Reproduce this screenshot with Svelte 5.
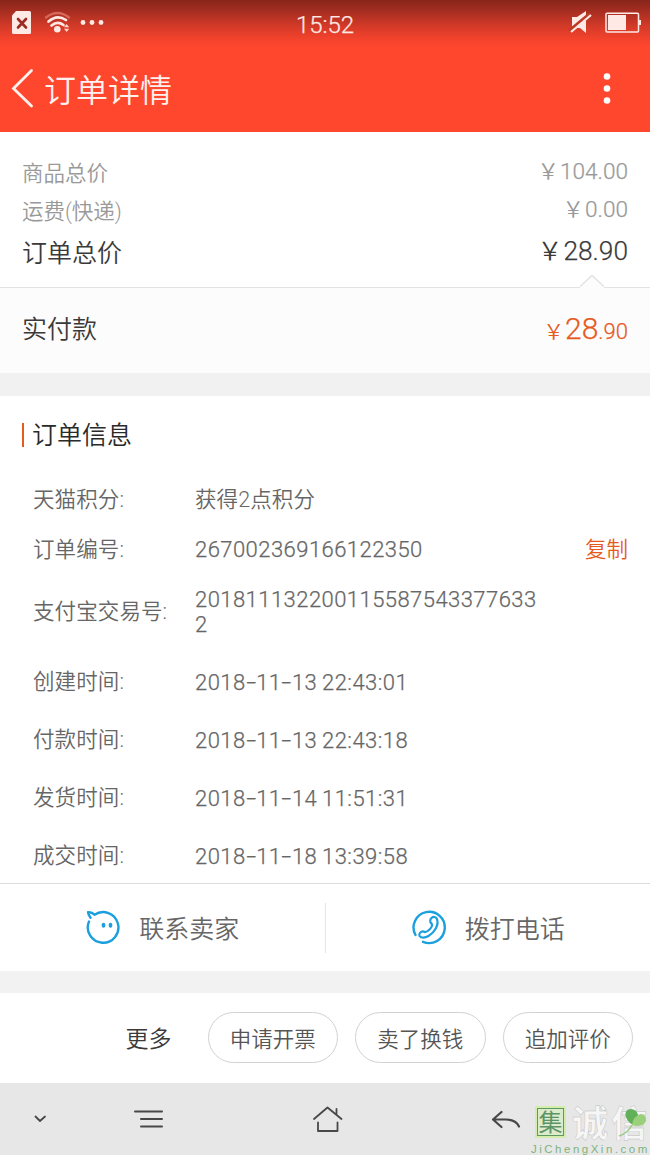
<script lang="ts">
	const prices = [
		{ label: "商品总价", value: "104.00", total: false },
		{ label: "运费(快递)", value: "0.00", total: false },
		{ label: "订单总价", value: "28.90", total: true },
	];

	const details = [
		{ label: "天猫积分", value: "获得2点积分", kind: "points" },
		{ label: "订单编号", value: "267002369166122350", kind: "short", copy: true },
		{ label: "支付宝交易号", value: "2018111322001155875433776332", kind: "long" },
		{ label: "创建时间", value: "2018-11-13 22:43:01", kind: "time" },
		{ label: "付款时间", value: "2018-11-13 22:43:18", kind: "time" },
		{ label: "发货时间", value: "2018-11-14 11:51:31", kind: "time" },
		{ label: "成交时间", value: "2018-11-18 13:39:58", kind: "time" },
	];

	const more = ["申请开票", "卖了换钱", "追加评价"];
</script>

<div class="page">
	<header>
		<div class="status-bar">
			<svg class="status-left" width="110" height="46" viewBox="0 0 110 46">
				<path d="M16 11h13.500q1.500 0 1.500 1.500V32.500q0 1.500-1.500 1.500h-16q-1.500 0-1.500-1.500V15.500z" fill="#ffe9e5" />
				<path d="M18 19l8 8.500M26 19l-8 8.500" stroke="#9b2c20" stroke-width="2.600" stroke-linecap="round" />
				<path d="M46 17.500Q57.500 8.500 69 17.500" fill="none" stroke="#d8665a" stroke-width="2.400" stroke-linecap="round" />
				<path d="M48.500 21.500Q57 14 66 20M51.500 25.500Q57.500 20.500 63.500 25" fill="none" stroke="#ffe9e5" stroke-width="2.700" stroke-linecap="round" />
				<circle cx="57.300" cy="29.300" r="3.300" fill="#ffe9e5" />
				<path d="M64 27.200l2.600-3.200 2.600 3.200zM64 28.800l2.600 3.200 2.600-3.200z" fill="#ffd2ca" />
				<circle cx="83" cy="22.500" r="2.400" fill="#ffe9e5" />
				<circle cx="92" cy="22.500" r="2.400" fill="#ffe9e5" />
				<circle cx="101" cy="22.500" r="2.400" fill="#ffe9e5" />
			</svg>
			<span class="clock">15:52</span>
			<svg class="status-right" width="85" height="46" viewBox="565 0 85 46">
				<path d="M572 17h5l9-6v22l-6-5h-8z" fill="#ffe9e5" />
				<path d="M569.500 31L590 14" stroke="#bd3928" stroke-width="4" />
				<path d="M571 32L591 15" stroke="#ffe9e5" stroke-width="2.200" />
				<rect x="606" y="13.200" width="32.500" height="18.800" rx="1" fill="none" stroke="#ffe9e5" stroke-width="1.500" />
				<path d="M608 15h18v15h-18zM639 20h2v5h-2z" fill="#ffe9e5" />
			</svg>
		</div>
		<div class="title-bar">
			<svg width="44" height="86" viewBox="0 0 44 86">
				<path d="M31.500 24.500L13.500 42.500L31.500 60" fill="none" stroke="#fff1ee" stroke-width="2.800" stroke-linecap="round" />
			</svg>
			<h1>订单详情</h1>
			<svg class="menu" width="20" height="86" viewBox="0 0 20 86">
				<circle cx="10" cy="30.500" r="3.300" fill="#fff" />
				<circle cx="10" cy="42.500" r="3.300" fill="#fff" />
				<circle cx="10" cy="54.500" r="3.300" fill="#fff" />
			</svg>
		</div>
	</header>

	<section class="prices">
		{#each prices as price}
			<div class="price-row" class:total={price.total}>
				<span>{price.label}</span>
				<span class="amount"><span class="yen">&#65509;</span>{price.value}</span>
			</div>
		{/each}
		<svg class="notch" width="26" height="14" viewBox="0 0 26 14">
			<path d="M1 13L13 1.500L25 13V14H1z" fill="#fcfcfc" />
			<path d="M1 12.500L13 1.500L25 12.500" fill="none" stroke="#e2e2e2" stroke-width="1.500" />
		</svg>
	</section>

	<section class="paid">
		<span>实付款</span>
		<span class="paid-amount"><span class="yen">&#65509;</span><b>28</b>.90</span>
	</section>

	<section class="info">
		<h2>订单信息</h2>
		{#each details as item}
			<div class="detail {item.kind}">
				<span class="label">{item.label}:</span>
				<span class="value">{#each item.value.split("-") as part, i}{#if i > 0}<span class="dash">-</span>{/if}{part}{/each}</span>
				{#if item.copy}
					<button class="copy">复制</button>
				{/if}
			</div>
		{/each}
	</section>

	<section class="contact">
		<button>
			<svg width="36" height="36" viewBox="0 0 36 36" fill="none" stroke="#1b9fdf" stroke-width="2.400" stroke-linecap="round">
				<path d="M4 12.500A15.300 15.300 0 1 0 9.500 5.800Q7 3 3 3.200Q3.300 6 5.500 8.800" stroke-linejoin="round" />
				<path d="M18.500 15.500v1.500M25.500 15.500v1.500" stroke-width="3.600" />
			</svg>
			<span>联系卖家</span>
		</button>
		<button>
			<svg width="36" height="36" viewBox="0 0 36 36" fill="none" stroke="#1b9fdf" stroke-width="2.400" stroke-linecap="round" stroke-linejoin="round">
				<path d="M4.500 26A15.600 15.600 0 1 1 12 32.800" />
				<path d="M20.500 9C22 7.500 25 7.500 26 10C28 16 24 23 17.500 27C14 29.200 9.500 29 8.500 27C7.500 24.500 10 22 12.500 22.500C14.500 24 16.500 22.500 18.500 20.500C20.500 18.500 22 16.500 20.500 14.500C18.500 13 19 10.500 20.500 9z" stroke-width="2.200" />
			</svg>
			<span>拨打电话</span>
		</button>
	</section>

	<section class="more">
		<span>更多</span>
		{#each more as action}
			<button>{action}</button>
		{/each}
	</section>

	<nav>
		<svg width="650" height="72" viewBox="0 0 650 72" fill="none" stroke="#484848" stroke-width="2" stroke-linecap="round" stroke-linejoin="round">
			<path d="M35.500 33.500L40 38L45 33.500" stroke-width="1.800" />
			<path d="M135 28.500H162M141 36H162M141 43.500H162" />
			<path d="M314 36L327.500 24.500L341.500 36M336.500 30.500V26M318 39.500V48H337.500V39.500" stroke-width="1.800" />
			<path d="M501.500 29L493 36.500L501.500 44M494 36.500H506Q516 36.500 519 43.500" stroke-width="2.200" />
		</svg>
		<div class="watermark">
			<span class="seal">集</span>
			<span class="brand">诚信</span>
			<svg class="leaf" width="30" height="32" viewBox="0 0 30 32">
				<path d="M15 18C6 13 5 3 12 2Q20 2 20 10z" fill="#62b05a" />
				<path d="M14 18Q15 9 23 7Q29 8 28 14Q25 21 14 18z" fill="#9bd07a" />
				<path d="M14 18Q10 26 1 29" fill="none" stroke="#9bcb80" stroke-width="1.500" />
			</svg>
			<span class="domain">JiChengXin.com</span>
		</div>
	</nav>
</div>

<style>
	:global(body) {
		background: #fff;
	}

	.page {
		width: 650px;
		height: 1155px;
		overflow: hidden;
		font-family: Roboto, "Noto Sans CJK SC", sans-serif;
		font-weight: 350;
		color: #3a3a3a;
	}

	svg {
		display: block;
		flex: none;
	}

	button {
		padding: 0;
		border: none;
		background: none;
		font: inherit;
		color: inherit;
	}

	header {
		height: 132px;
		background: linear-gradient(#87261b 0, #9c2b1f 8px, #d33a28 26px, #f5432d 40px, #ff472e 48px);
	}

	.status-bar {
		display: grid;
		grid-template-columns: 1fr auto 1fr;
		align-items: center;
		height: 46px;
	}

	.status-right {
		justify-self: end;
	}

	.clock {
		padding-top: 3px;
		font-size: 24px;
		letter-spacing: -0.1px;
		color: #ffe9e5;
		-webkit-text-stroke: 0.25px;
	}

	.title-bar {
		display: flex;
		height: 86px;
	}

	h1 {
		flex: 1;
		margin: 0;
		font-size: 32px;
		font-weight: 350;
		line-height: 90px;
		color: #fff1ee;
	}

	.menu {
		margin-right: 33px;
	}

	.prices {
		position: relative;
		box-sizing: border-box;
		height: 156px;
		padding: 23px 22px 0;
		border-bottom: 1px solid #e2e2e2;
	}

	.price-row {
		display: flex;
		justify-content: space-between;
		height: 38px;
		font-size: 21.5px;
		line-height: 38px;
		color: #999;
	}

	.price-row.total {
		padding-top: 2px;
		font-size: 25px;
		line-height: 42px;
		color: #3a3a3a;
	}

	.amount {
		margin-top: -2px;
		font-size: 1.05em;
		-webkit-text-stroke: 0.25px;
	}

	.total .amount {
		margin-top: -3px;
	}

	.yen {
		margin-right: 1px;
		font-size: 0.95em;
		-webkit-text-stroke: 0;
	}

	.notch {
		position: absolute;
		right: 45px;
		bottom: -1px;
	}

	.paid {
		display: flex;
		justify-content: space-between;
		box-sizing: border-box;
		height: 85px;
		padding: 0 22px;
		font-size: 25px;
		line-height: 83px;
		background: #fcfcfc;
	}

	.paid-amount {
		margin-top: -1px;
		font-size: 22px;
		color: #e65a1e;
		-webkit-text-stroke: 0.25px;
	}

	.paid-amount b {
		font-size: 30px;
		font-weight: 350;
	}

	.info {
		box-sizing: border-box;
		height: 511px;
		border-top: 23px solid #f1f1f1;
		border-bottom: 1px solid #ddd;
		overflow: hidden;
	}

	h2 {
		height: 24px;
		margin: 27px 0 28px 22px;
		padding-left: 8px;
		border-left: 2px solid #e65a1e;
		font-size: 25px;
		font-weight: 350;
		line-height: 26px;
		color: #2a2a2a;
	}

	.detail {
		display: grid;
		grid-template-columns: 162px 346px 1fr;
		align-items: center;
		box-sizing: border-box;
		height: 49.8px;
		padding: 0 22px 0 33px;
		font-size: 21.5px;
		line-height: 25px;
		color: #666;
	}

	.detail.long {
		height: 78px;
		padding-bottom: 3px;
	}

	.detail.time {
		height: 58px;
	}

	.label {
		margin-top: -1px;
		letter-spacing: 0.1px;
	}

	.value {
		font-size: 22px;
		letter-spacing: 0.45px;
		word-break: break-all;
		-webkit-text-stroke: 0.25px;
	}

	.points .value {
		font-size: 21.5px;
		letter-spacing: 0.1px;
		-webkit-text-stroke: 0;
	}

	.time .value {
		margin-top: 1px;
		word-spacing: -1px;
	}

	.dash {
		display: inline-block;
		width: 10.5px;
		text-align: center;
		letter-spacing: 0;
		transform: scaleX(1.6);
	}

	.copy {
		justify-self: end;
		color: #e65a1e;
	}

	.contact {
		display: flex;
		align-items: center;
		height: 87px;
	}

	.contact button {
		display: flex;
		flex: 1;
		align-items: center;
		justify-content: center;
		gap: 18px;
		height: 50px;
		padding-bottom: 2px;
		font-size: 25px;
		color: #666;
	}

	.contact button + button {
		border-left: 1px solid #e6e6e6;
	}

	.more {
		display: flex;
		align-items: center;
		justify-content: flex-end;
		gap: 17px;
		box-sizing: border-box;
		height: 112px;
		padding: 0 17px 2px 0;
		border-top: 22px solid #f2f2f2;
		font-size: 23px;
	}

	.more span {
		margin-right: 19px;
	}

	.more button {
		box-sizing: border-box;
		width: 130.5px;
		height: 51px;
		border: 1px solid #d2d2d2;
		border-radius: 26px;
		font-size: 21.5px;
		color: #555;
	}

	nav {
		position: relative;
		height: 73px;
		background: #e7e7e7;
	}

	.watermark {
		position: absolute;
		top: 24px;
		left: 531px;
		width: 119px;
		height: 49px;
		font-family: "Noto Sans CJK SC", sans-serif;
	}

	.seal {
		position: absolute;
		left: 6px;
		top: 1px;
		width: 25px;
		height: 26px;
		border: 1.5px solid #5c9b5d;
		outline: 2px solid #d3edac;
		background: #dcebcb;
		font-size: 24px;
		font-weight: 400;
		line-height: 24px;
		text-align: center;
		color: #5c9468;
	}

	.brand {
		position: absolute;
		left: 41px;
		top: -4px;
		font-size: 36px;
		font-weight: 700;
		line-height: 36px;
		letter-spacing: 3px;
		white-space: nowrap;
		color: #f6f6f6;
		-webkit-text-stroke: 0.4px #bbb;
	}

	.leaf {
		position: absolute;
		top: 0;
		left: 87px;
	}

	.domain {
		position: absolute;
		left: 0;
		top: 35px;
		font: 400 11.5px/14px "Liberation Sans", sans-serif;
		letter-spacing: 2.5px;
		color: #7fb47c;
	}
</style>
